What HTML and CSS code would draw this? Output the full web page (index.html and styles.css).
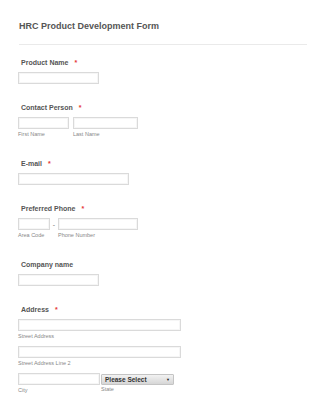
FILE: index.html
```html
<!DOCTYPE html>
<html lang="en">
<head>
    <meta charset="UTF-8">
    <meta name="viewport" content="width=device-width, initial-scale=1.0">
    <title>HRC Product Development Form</title>
    <link rel="stylesheet" href="styles.css">
</head>
<body>
    <div class="form">
        <h1>HRC Product Development Form</h1>
        <hr class="divider">

        <div class="field">
            <label class="label">Product Name <span class="req">*</span></label>
            <input type="text" class="w-md">
        </div>

        <div class="field">
            <label class="label">Contact Person <span class="req">*</span></label>
            <div class="row">
                <div class="col">
                    <input type="text" class="w-first">
                    <span class="sub">First Name</span>
                </div>
                <div class="col">
                    <input type="text" class="w-last">
                    <span class="sub">Last Name</span>
                </div>
            </div>
        </div>

        <div class="field">
            <label class="label">E-mail <span class="req">*</span></label>
            <input type="email" class="w-email">
        </div>

        <div class="field">
            <label class="label">Preferred Phone <span class="req">*</span></label>
            <div class="row">
                <div class="col">
                    <input type="text" class="w-area">
                    <span class="sub">Area Code</span>
                </div>
                <span class="dash">-</span>
                <div class="col">
                    <input type="text" class="w-phone">
                    <span class="sub">Phone Number</span>
                </div>
            </div>
        </div>

        <div class="field">
            <label class="label">Company name</label>
            <input type="text" class="w-md">
        </div>

        <div class="field">
            <label class="label">Address <span class="req">*</span></label>
            <div class="addr-line">
                <input type="text" class="w-street">
                <span class="sub">Street Address</span>
            </div>
            <div class="addr-line">
                <input type="text" class="w-street">
                <span class="sub">Street Address Line 2</span>
            </div>
            <div class="row addr-line">
                <div class="col">
                    <input type="text" class="w-city">
                    <span class="sub">City</span>
                </div>
                <div class="col">
                    <div class="select">Please Select <span class="arrow">&#9660;</span></div>
                    <span class="sub sub-state">State</span>
                </div>
            </div>
            <div class="addr-line">
                <input type="text" class="w-city">
            </div>
        </div>
    </div>
</body>
</html>
```

FILE: styles.css
```css
body {
    margin: 0;
    font-family: "Liberation Sans", Arial, sans-serif;
    background-color: #fff;
    color: #555;
}
.form {
    padding: 20px 18px 0 18px;
}
h1 {
    margin: 0 0 0 1px;
    font-size: 9px;
    line-height: 12px;
    font-weight: bold;
    color: #555;
}
.divider {
    margin: 12px 0 13px 1px;
    width: 288px;
    border: none;
    border-top: 1px solid #eaeaea;
    height: 0;
}
.field {
    margin-bottom: 19px;
}
.label {
    display: block;
    margin: 0 0 4px 3px;
    font-size: 7px;
    line-height: 10px;
    font-weight: bold;
    color: #555;
}
.req {
    margin-left: 4px;
    color: #e53935;
    font-size: 7px;
}
input {
    display: block;
    box-sizing: border-box;
    height: 12px;
    margin: 0;
    padding: 0;
    border: 1px solid #dadada;
    box-shadow: inset 0 0 0 1px #f6f6f6;
    background-color: #fff;
}
.row {
    display: flex;
    align-items: flex-start;
}
.col {
    display: flex;
    flex-direction: column;
    margin-right: 4px;
}
.sub {
    display: block;
    font-size: 5.5px;
    line-height: 11px;
    color: #888;
}
.dash {
    width: 8px;
    margin-left: -4px;
    text-align: center;
    font-size: 7px;
    line-height: 14px;
    color: #777;
}
.w-md { width: 81px; }
.w-first { width: 51px; }
.w-last { width: 65px; }
.w-email { width: 111px; }
.w-area { width: 32px; }
.w-phone { width: 80px; }
.w-street { width: 163px; }
.w-city { width: 82px; }
.addr-line {
    margin-bottom: 4px;
}
.addr-line .col {
    margin-right: 1px;
}
.select {
    box-sizing: border-box;
    width: 73px;
    height: 11px;
    margin-top: 1px;
    padding: 0 3px;
    display: flex;
    justify-content: space-between;
    align-items: center;
    border: 1px solid #c4c4c4;
    border-radius: 1px;
    background: linear-gradient(#f2f2f2, #d6d6d6);
    font-size: 6.5px;
    font-weight: bold;
    color: #333;
}
.arrow {
    font-size: 4px;
    color: #222;
}
.sub-state {
    line-height: 9px;
}
```
